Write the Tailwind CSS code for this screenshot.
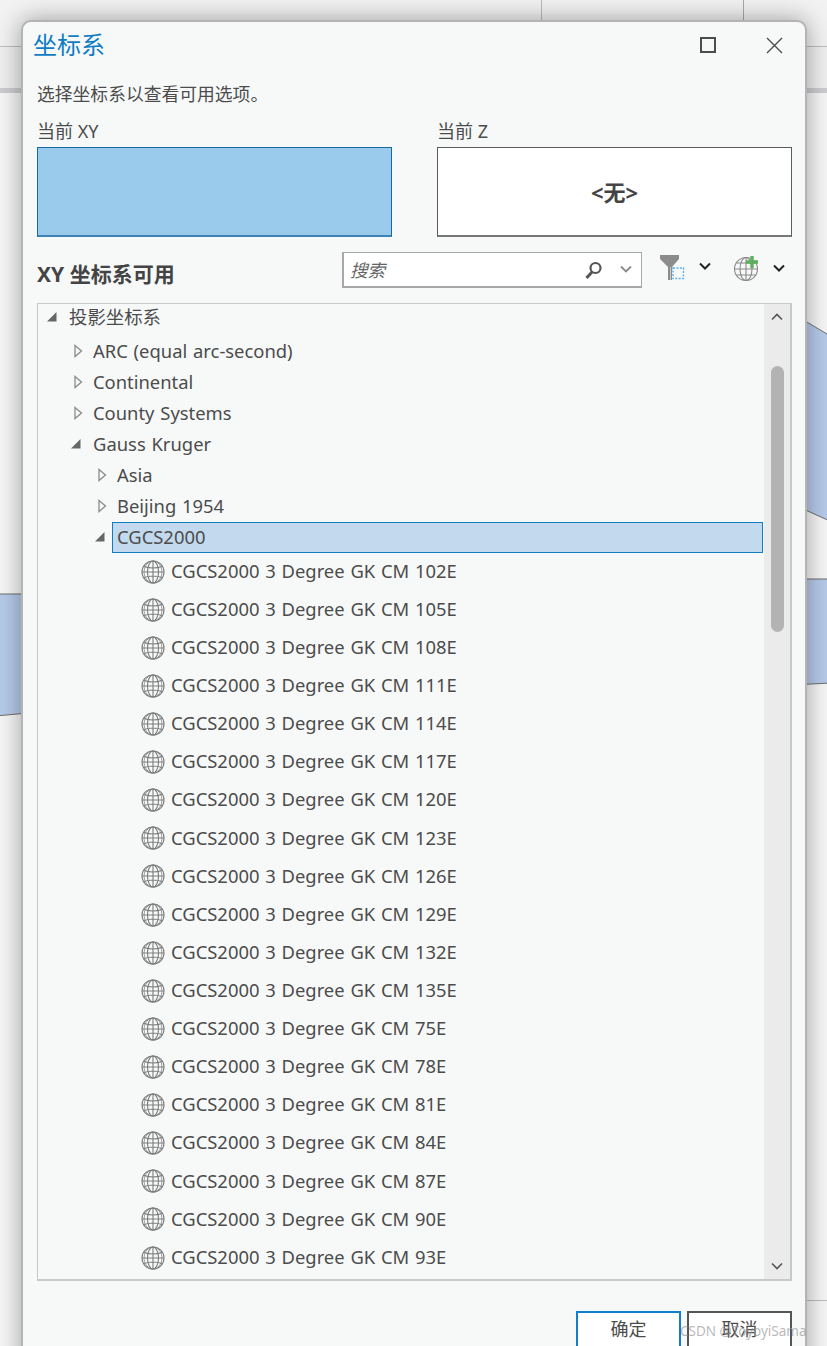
<!DOCTYPE html>
<html lang="zh">
<head>
  <meta charset="UTF-8">
  <title>坐标系</title>
  <script src="https://cdn.jsdelivr.net/npm/@tailwindcss/browser@4"></script>
</head>
<body class="bg-white">
  <div class="relative w-[827px] h-[1346px] overflow-hidden bg-[#ececec] font-['Noto_Sans','Noto_Sans_CJK_SC',sans-serif] text-[#4c4c4c]">

    <!-- map window behind the dialog -->
    <svg class="absolute left-0 top-0" width="827" height="1346" viewBox="0 0 827 1346">
      <rect x="0" y="0" width="827" height="46" fill="#f2f2f2"/>
      <rect x="0" y="46" width="827" height="1" fill="#bdbdbd"/>
      <rect x="0" y="47" width="827" height="41" fill="#efefef"/>
      <rect x="0" y="88" width="827" height="5" fill="#cdcdd1"/>
      <rect x="0" y="93" width="827" height="1253" fill="#f6f6f6"/>
      <rect x="541" y="0" width="1" height="22" fill="#b9b9b9"/>
      <rect x="743" y="0" width="1" height="22" fill="#a9a9a9"/>
      <path d="M-5 594H40V712L-5 716Z" fill="#b6caea" stroke="#6f6f6f"/>
      <path d="M790 312L832 337V522L790 503Z" fill="#b6caea" stroke="#6f6f6f"/>
      <path d="M790 579H832V683L790 685Z" fill="#b6caea" stroke="#6f6f6f"/>
      <rect x="807" y="1300" width="20" height="1" fill="#bdbdbd"/>
    </svg>

    <!-- dialog -->
    <div class="absolute left-[21px] top-[20px] w-[786px] h-[1400px] bg-[#f7f9f9] border-2 border-[#b4b4b4] rounded-t-[10px] shadow-[0_0_24px_rgba(0,0,0,0.36)] pl-[14px] pr-[13px]">
      <div class="flex items-center h-[46px] -ml-[4px]">
        <h1 class="flex-1 text-[24px] text-[#0f7cc4]">坐标系</h1>
        <svg class="mr-[50px]" width="16" height="16" viewBox="0 0 16 16" fill="none" stroke="#4c4c4c" stroke-width="2"><rect x="1" y="1" width="14" height="14"/></svg>
        <svg class="mr-[9px]" width="17" height="17" viewBox="0 0 17 17" fill="none" stroke="#4c4c4c" stroke-width="1.4"><path d="M1 1L16 16M16 1L1 16"/></svg>
      </div>

      <p class="mt-[14px] h-[24px] leading-[24px] text-[17.8px]">选择坐标系以查看可用选项。</p>

      <div class="grid grid-cols-[355px_355px] gap-x-[45px] mt-[13px]">
        <div class="h-[24px] leading-[24px] text-[18px]">当前 XY</div>
        <div class="h-[24px] leading-[24px] text-[18px]">当前 Z</div>
        <div class="mt-[4px] h-[90px] bg-[#9acbec] border border-[#1769a3] border-b-2 border-b-[#3c84b6]"></div>
        <div class="mt-[4px] h-[90px] bg-white border border-[#5c5c5c] border-b-2 border-b-[#777777] flex items-center justify-center pt-[2px] font-bold text-[22px] text-[#444444]">&lt;无&gt;</div>
      </div>

      <div class="flex items-center h-[36px] mt-[15px]">
        <h2 class="w-[305px] font-bold text-[21px] text-[#444444] pt-[9px]">XY 坐标系可用</h2>
        <div class="flex items-center w-[300px] h-[36px] bg-white border-2 border-[#a8a8a8] border-t border-r pl-[6px]">
          <span class="flex-1 italic text-[17.6px] text-[#666666] pt-[1px]">搜索</span>
          <svg class="mr-[15px]" width="20" height="20" viewBox="0 0 20 20" fill="none" stroke="#555555"><circle cx="11.5" cy="8" r="5" stroke-width="2.2"/><path d="M8 12L2.5 18" stroke-width="3"/></svg>
          <svg class="mr-[8px]" width="14" height="9" viewBox="0 0 14 9" fill="none" stroke="#8a8a8a" stroke-width="1.8"><path d="M2 1.5L7 6.5L12 1.5"/></svg>
        </div>
        <svg class="ml-[16px] -mt-[4px]" width="28" height="28" viewBox="0 0 28 28" fill="none">
          <path d="M2 1H21V5L14 13V26H10V13L2 5Z" fill="#8c8c8c"/>
          <path d="M12.5 13V26" stroke="#c8c8c8" stroke-width="1"/>
          <rect x="15" y="14" width="10.5" height="10.5" stroke="#58b0ee" stroke-width="1.4" stroke-dasharray="2 1.4"/>
        </svg>
        <svg class="ml-[12px] -mt-[7px]" width="14" height="9" viewBox="0 0 14 9" fill="none" stroke="#222222" stroke-width="2"><path d="M2 1.5L7 6.5L12 1.5"/></svg>
        <svg class="ml-[21px] -mt-[3px]" width="27" height="27" viewBox="0 0 27 27" fill="none" stroke="#8a8a8a" stroke-width="1.1">
          <circle cx="13" cy="14" r="11.5"/>
          <ellipse cx="13" cy="14" rx="6" ry="11.5"/>
          <path d="M13 2.5V25.5M1.5 14H24.5M3.5 8H22.5M3.5 20H22.5"/>
          <path d="M19 1V13M13 7H25" stroke="#5fae5f" stroke-width="3.4"/>
        </svg>
        <svg class="ml-[12px] -mt-[4px]" width="14" height="9" viewBox="0 0 14 9" fill="none" stroke="#222222" stroke-width="2"><path d="M2 1.5L7 6.5L12 1.5"/></svg>
      </div>

      <!-- tree -->
      <div class="flex h-[978px] mt-[15px] border-2 border-[#c8c8c8] border-t border-l overflow-hidden">
        <div id="tree" class="flex-1 min-w-0 text-[18.4px] [word-spacing:1px] overflow-hidden"></div>
        <div class="flex flex-col items-center w-[26px] bg-[#ebebeb] pt-[9px] pb-[9px]">
          <svg class="shrink-0" width="14" height="8" viewBox="0 0 14 8" fill="none" stroke="#555555" stroke-width="1.6"><path d="M2 6.5L7 1.5L12 6.5"/></svg>
          <div class="w-[13px] h-[266px] mt-[45px] bg-[#b3b3b3] rounded-full"></div>
          <svg class="shrink-0 mt-auto" width="14" height="8" viewBox="0 0 14 8" fill="none" stroke="#555555" stroke-width="1.6"><path d="M2 1.5L7 6.5L12 1.5"/></svg>
        </div>
      </div>

      <div class="flex justify-end gap-[6px] mt-[30px]">
        <button class="w-[105px] h-[60px] pb-[24px] bg-white border-2 border-[#0f7fd2] border-b-[#bcd8ee] text-[18px]">确定</button>
        <button class="w-[105px] h-[60px] pb-[24px] bg-white border-2 border-[#555555] text-[18px]">取消</button>
      </div>
    </div>

    <!-- watermark -->
    <div class="absolute left-[680px] top-[1321px] text-[13.5px] text-[#9a9a9a]/70 whitespace-nowrap">CSDN @ToyoyiSama</div>
  </div>

  <script>
    const globe = `<svg class="shrink-0" width="24" height="24" viewBox="0 0 24 24" fill="none" stroke="#7c7c7c" stroke-width="1.1">
      <circle cx="12" cy="12" r="11"/><ellipse cx="12" cy="12" rx="5.5" ry="11"/><ellipse cx="12" cy="12" rx="9" ry="11" stroke-width="0.7"/><path d="M12 1V23M1 12H23M3 6.5Q12 9.5 21 6.5M3 17.5Q12 14.5 21 17.5"/></svg>`;
    const open = `<svg class="shrink-0" width="12" height="12" viewBox="0 0 12 12"><path d="M1 10.5H10.5V1Z" fill="#666666"/></svg>`;
    const closed = `<svg class="shrink-0" width="9" height="14" viewBox="0 0 9 14" fill="none" stroke="#8a8a8a" stroke-width="1.3"><path d="M1 1.5L7.5 7L1 12.5Z"/></svg>`;

    const branches = [
      { text: '投影坐标系', cls: 'h-[31px] pl-[8px] -mb-[0.5px] pb-[5px]', icon: open, gap: 'w-[11px]' },
      { text: 'ARC (equal arc-second)', cls: 'h-[31px] mt-[1px] pl-[36px]', icon: closed, gap: 'w-[10px]' },
      { text: 'Continental', cls: 'h-[31px] pl-[36px]', icon: closed, gap: 'w-[10px]' },
      { text: 'County Systems', cls: 'h-[31px] pl-[36px]', icon: closed, gap: 'w-[10px]' },
      { text: 'Gauss Kruger', cls: 'h-[31px] pl-[32px]', icon: open, gap: 'w-[11px]' },
      { text: 'Asia', cls: 'h-[31px] pl-[60px]', icon: closed, gap: 'w-[10px]' },
      { text: 'Beijing 1954', cls: 'h-[31px] pl-[60px]', icon: closed, gap: 'w-[10px]' }
    ];
    const zones = ['102E', '105E', '108E', '111E', '114E', '117E', '120E', '123E', '126E', '129E', '132E', '135E', '75E', '78E', '81E', '84E', '87E', '90E', '93E'];

    let html = '';
    branches.forEach(b => {
      html += `<div class="flex items-center ${b.cls}">${b.icon}<span class="${b.gap} shrink-0"></span><span>${b.text}</span></div>`;
    });
    html += `<div class="flex items-center h-[31px] pl-[56px] pr-[1px]">${open}<span class="w-[6px] shrink-0"></span>
      <span class="flex-1 h-[31px] leading-[27px] bg-[#c2d9ee] border border-[#0f7cc4] pl-[4px]">CGCS2000</span></div>`;
    zones.forEach(z => {
      html += `<div class="flex items-center gap-[6px] h-[38.11px] pl-[103px]">${globe}<span class="pb-[2px]">CGCS2000 3 Degree GK CM ${z}</span></div>`;
    });
    document.getElementById('tree').innerHTML = html;
  </script>
</body>
</html>
